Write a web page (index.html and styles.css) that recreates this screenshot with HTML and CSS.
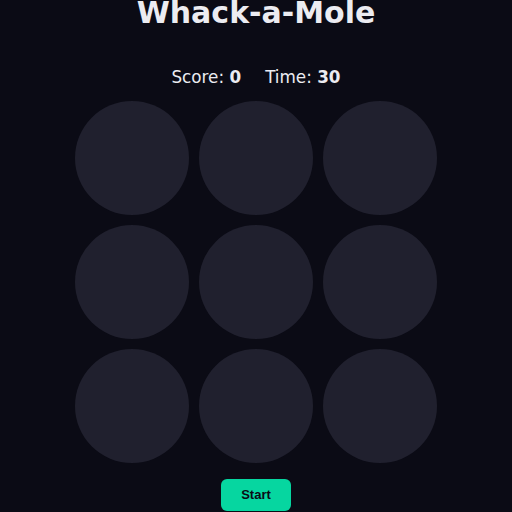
FILE: index.html
```html
<!DOCTYPE html>
<html lang="en">
<head>
<meta charset="utf-8">
<title>Whack-a-Mole</title>
<link rel="stylesheet" href="styles.css">
</head>
<body>
<main class="game">
  <h1 class="title">Whack-a-Mole</h1>
  <div class="stats">
    <span class="stat">Score: <b>0</b></span>
    <span class="stat">Time: <b>30</b></span>
  </div>
  <div class="board">
    <div class="hole"></div>
    <div class="hole"></div>
    <div class="hole"></div>
    <div class="hole"></div>
    <div class="hole"></div>
    <div class="hole"></div>
    <div class="hole"></div>
    <div class="hole"></div>
    <div class="hole"></div>
  </div>
  <button class="start-btn" type="button">Start</button>
</main>
</body>
</html>
```
FILE: styles.css
```css
html, body {
  margin: 0;
  padding: 0;
  height: 100%;
  overflow: hidden;
}

body {
  background: #0b0b15;
  color: #ececf1;
  font-family: "DejaVu Sans", sans-serif;
}

.game {
  display: flex;
  flex-direction: column;
  align-items: center;
}

.title {
  margin: -5px 0 0;
  font-size: 30px;
  font-weight: bold;
  line-height: normal;
  color: #ececf1;
}

.stats {
  margin-top: 37px;
  display: flex;
  gap: 24px;
  font-size: 16.8px;
  line-height: normal;
}

.stat b {
  font-weight: bold;
}

.board {
  margin-top: 14px;
  display: grid;
  grid-template-columns: repeat(3, 114px);
  grid-auto-rows: 114px;
  gap: 10px;
}

.hole {
  border-radius: 50%;
  background: #20202e;
}

.start-btn {
  margin-top: 16px;
  padding: 8px 20px;
  border: none;
  border-radius: 6px;
  background: #06d6a0;
  color: #0b0b15;
  font-family: "Liberation Sans", Arial, sans-serif;
  font-size: 13px;
  font-weight: bold;
  line-height: 16px;
  cursor: pointer;
}
```
